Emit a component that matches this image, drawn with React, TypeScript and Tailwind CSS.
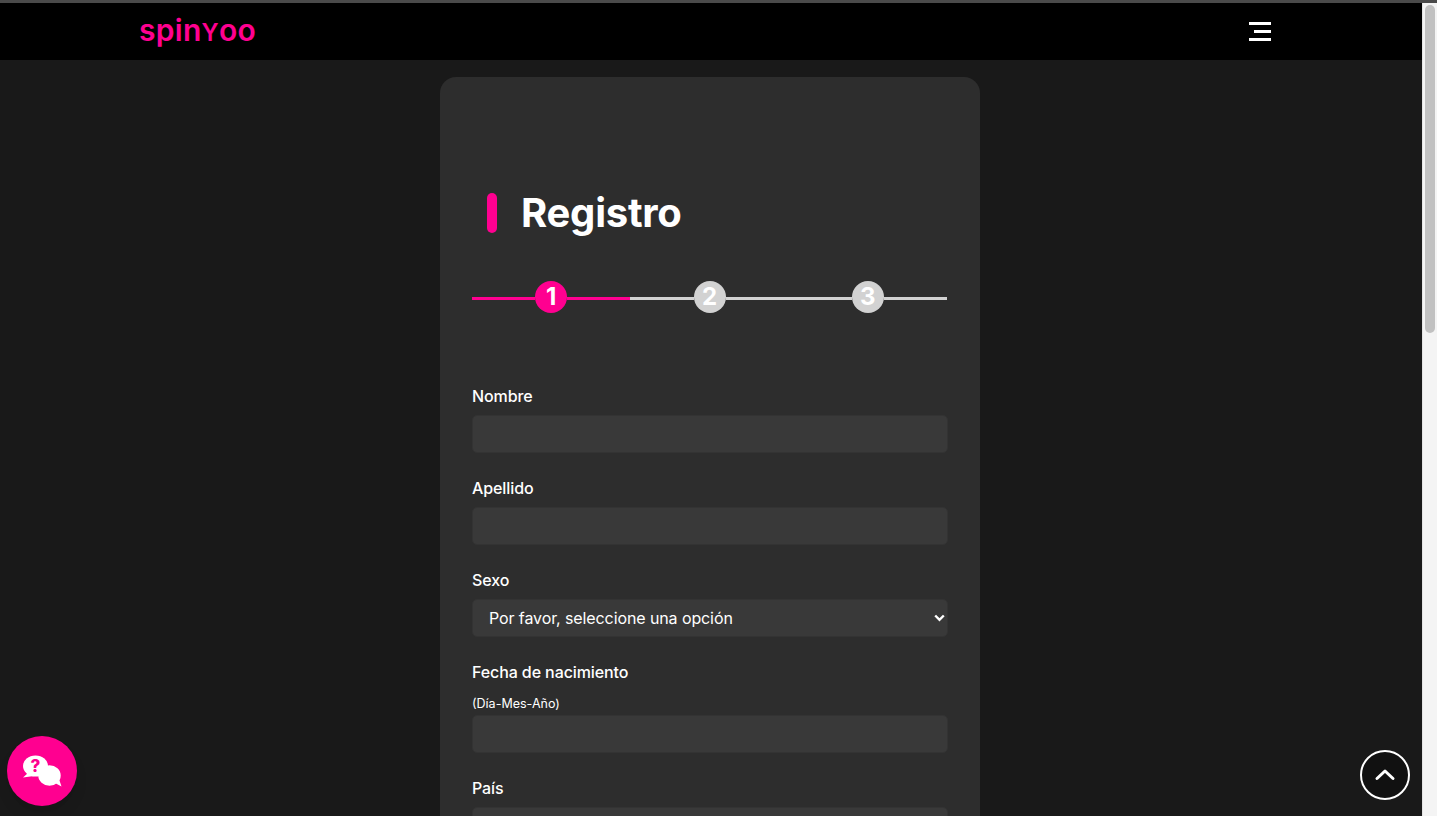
function Field({ label, hint, select }: { label: string; hint?: string; select?: string }) {
  return (
    <div className="mb-[23px]">
      <label className="block text-base leading-6 font-medium tracking-[-0.1px] text-white mb-[7px]">{label}</label>
      {hint && <p className="text-[12.5px] leading-[23px] pt-px font-normal text-white">{hint}</p>}
      {select ? (
        <div className="relative">
          <select className="block w-full h-[38px] appearance-none rounded-[5px] border border-[#333333] bg-[#393939] pl-4 text-base tracking-[-0.1px] text-white outline-none">
            <option>{select}</option>
          </select>
          <svg className="absolute right-[3px] top-[14px] w-[11px] h-[10px]" viewBox="0 0 11 10" fill="none" stroke="white" strokeWidth="2.4">
            <path d="M1.2 2.5 L5.5 6.8 L9.8 2.5" />
          </svg>
        </div>
      ) : (
        <input className="block w-full h-[38px] rounded-[5px] border border-[#333333] bg-[#393939] outline-none" />
      )}
    </div>
  );
}

function Step({ n, active }: { n: number; active?: boolean }) {
  const line = active ? "bg-[#ff0090]" : "bg-[#d2d2d2]";
  return (
    <div className="flex-1 flex items-center">
      <div className={`flex-1 h-[3px] mt-[2px] ${line}`} />
      <div
        className={`w-8 h-8 rounded-full flex items-center justify-center text-2xl font-bold text-white ${
          active ? "bg-[#ff0090]" : "bg-[#d2d2d2]"
        }`}
      >
        {n}
      </div>
      <div className={`flex-1 h-[3px] mt-[2px] ${line}`} />
    </div>
  );
}

function ChatIcon() {
  return (
    <svg className="w-[42px] h-[36px]" viewBox="0 0 42 36">
      <ellipse cx="28.5" cy="22.5" rx="12" ry="11" fill="white" stroke="#ff0090" strokeWidth="1.6" />
      <path d="M34 30 L40.5 33.5 L38 26 Z" fill="white" />
      <ellipse cx="14.5" cy="13" rx="12.5" ry="10.5" fill="white" />
      <path d="M7 20 L2 24.5 L13 23 Z" fill="white" />
      <text x="14.5" y="19" textAnchor="middle" fontSize="17" fontWeight="800" fill="#ff0090" fontFamily="Inter, sans-serif">
        ?
      </text>
    </svg>
  );
}

export default function App() {
  return (
    <div className="relative h-[816px] overflow-hidden bg-[#191919] font-['Inter',sans-serif]">
      <div className="h-[3px] bg-[#4a4a4a]" />
      <div className="flex h-[813px]">
        <div className="flex-1 min-w-0">
          <header className="h-[57px] bg-black flex items-center justify-between pl-[139px] pr-[151px]">
            <div className="text-[30px] leading-none font-semibold tracking-[0.3px] text-[#ff0090] -mt-1">
              spin<span className="text-[24px]">Y</span>oo
            </div>
            <button className="flex flex-col items-end gap-[5px] w-[22px] -mt-[1px]">
              <span className="block h-[3px] w-[22px] bg-white" />
              <span className="block h-[3px] w-[17px] bg-white" />
              <span className="block h-[3px] w-[22px] bg-white" />
            </button>
          </header>

          <main className="flex justify-center pt-[17px]">
            <section className="w-[540px] ml-[-2px] rounded-2xl bg-[#2d2d2d] px-8 pt-[116px] pb-10">
              <div className="flex items-center pl-[15px] gap-6 h-10">
                <span className="w-[10px] h-10 rounded-full bg-[#ff0090]" />
                <h1 className="text-[40px] leading-10 font-bold tracking-[-0.25px] text-white">Registro</h1>
              </div>

              <div className="flex mt-12 mb-[71px] mr-px">
                <Step n={1} active />
                <Step n={2} />
                <Step n={3} />
              </div>

              <form>
                <Field label="Nombre" />
                <Field label="Apellido" />
                <Field label="Sexo" select="Por favor, seleccione una opción" />
                <Field label="Fecha de nacimiento" hint="(Día-Mes-Año)" />
                <Field label="País" />
              </form>
            </section>
          </main>
        </div>

        <aside className="w-[15px] shrink-0 bg-[#f4f4f4] border-l border-[#e4e4e4] pl-[2px] pt-[2px]">
          <div className="w-[10px] h-[328px] rounded-full bg-[#c1c1c1]" />
        </aside>
      </div>

      <button className="absolute left-[7px] top-[736px] w-[70px] h-[70px] rounded-full bg-[#ff0090] flex items-center justify-center shadow-lg">
        <ChatIcon />
      </button>
      <button className="absolute left-[1360px] top-[750px] w-[50px] h-[50px] rounded-full border-2 border-white bg-[#111111] flex items-center justify-center">
        <svg className="w-6 h-6" viewBox="0 0 24 24" fill="none" stroke="white" strokeWidth="3" strokeLinecap="round" strokeLinejoin="round">
          <path d="M4 15.5 L12 8 L20 15.5" />
        </svg>
      </button>
    </div>
  );
}
